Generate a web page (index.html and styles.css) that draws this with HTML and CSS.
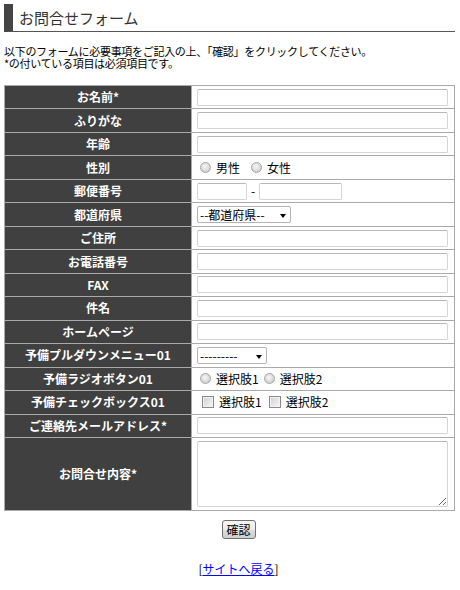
FILE: index.html
```html
<!DOCTYPE html>
<html lang="ja">
<head>
<meta charset="utf-8">
<title>お問合せフォーム</title>
<link rel="stylesheet" href="styles.css">
</head>
<body>
<div class="page">
  <h1 class="title">お問合せフォーム</h1>
  <p class="intro">以下のフォームに必要事項をご記入の上、「確認」をクリックしてください。<br>*の付いている項目は必須項目です。</p>
  <form class="form">
    <table class="form-table">
      <colgroup><col class="col-label"><col class="col-field"></colgroup>
      <tr><th>お名前*</th><td><input class="text" type="text"></td></tr>
      <tr><th>ふりがな</th><td><input class="text" type="text"></td></tr>
      <tr><th>年齢</th><td><input class="text" type="text"></td></tr>
      <tr><th>性別</th><td>
        <div class="choices gender">
          <label class="choice"><input class="radio" type="radio" name="sex">男性</label>
          <label class="choice"><input class="radio" type="radio" name="sex">女性</label>
        </div>
      </td></tr>
      <tr><th>郵便番号</th><td>
        <div class="zip"><input class="text zip1" type="text"><span class="dash">-</span><input class="text zip2" type="text"></div>
      </td></tr>
      <tr><th>都道府県</th><td><span class="select pref"><select><option>--都道府県--</option></select></span></td></tr>
      <tr><th>ご住所</th><td><input class="text" type="text"></td></tr>
      <tr><th>お電話番号</th><td><input class="text" type="text"></td></tr>
      <tr><th>FAX</th><td><input class="text" type="text"></td></tr>
      <tr><th>件名</th><td><input class="text" type="text"></td></tr>
      <tr><th>ホームページ</th><td><input class="text" type="text"></td></tr>
      <tr><th>予備プルダウンメニュー01</th><td><span class="select pulldown"><select><option>---------</option></select></span></td></tr>
      <tr><th>予備ラジオボタン01</th><td>
        <div class="choices">
          <label class="choice"><input class="radio" type="radio" name="r1">選択肢1</label>
          <label class="choice"><input class="radio" type="radio" name="r1">選択肢2</label>
        </div>
      </td></tr>
      <tr><th>予備チェックボックス01</th><td>
        <div class="choices">
          <label class="choice"><input class="check" type="checkbox">選択肢1</label>
          <label class="choice"><input class="check" type="checkbox">選択肢2</label>
        </div>
      </td></tr>
      <tr><th>ご連絡先メールアドレス*</th><td><input class="text" type="text"></td></tr>
      <tr class="tall"><th>お問合せ内容*</th><td><textarea class="area"></textarea></td></tr>
    </table>
    <div class="actions"><button type="button" class="submit">確認</button></div>
    <p class="back">[<a href="#">サイトへ戻る</a>]</p>
  </form>
</div>
</body>
</html>
```
FILE: styles.css
```css
html, body {
  margin: 0;
  padding: 0;
  background: #fff;
}
body {
  font-family: "Noto Sans CJK JP", "Liberation Sans", sans-serif;
  font-size: 12px;
  color: #000;
}
.page {
  width: 451px;
  padding: 4px 4px 0 4px;
}
.title {
  margin: 0;
  height: 27px;
  line-height: 27px;
  border-left: 9px solid #444;
  border-bottom: 1px solid #555;
  padding-left: 6px;
  font-size: 15px;
  font-weight: normal;
  color: #333;
}
.intro {
  margin: 13px 0 16px 0;
  font-size: 11px;
  line-height: 12px;
  letter-spacing: -0.3px;
}
.form {
  margin: 0;
}
.form-table {
  width: 451px;
  border-collapse: collapse;
  table-layout: fixed;
}
.col-label {
  width: 187px;
}
.form-table tr {
  height: 23.47px;
}
.form-table tr.tall {
  height: 73px;
}
.form-table th,
.form-table td {
  border: 1px solid #aaa;
  padding: 0;
  vertical-align: middle;
}
.form-table th {
  background: #404040;
  color: #fff;
  font-weight: bold;
  font-size: 12px;
  text-align: center;
  line-height: 14px;
}
.form-table td {
  padding-left: 5px;
  line-height: 14px;
}
.text {
  box-sizing: border-box;
  display: block;
  width: 251px;
  height: 17px;
  margin: 0;
  padding: 0 2px;
  border: 1px solid #d4d4d4;
  border-top-color: #b8b8b8;
  border-radius: 2px;
  background: #fff;
  font: inherit;
  outline: none;
}
.zip {
  display: flex;
  align-items: center;
}
.zip .text.zip1 {
  width: 50px;
}
.zip .text.zip2 {
  width: 83px;
}
.dash {
  margin: 0 4px;
  width: 4px;
  text-align: center;
  line-height: 12px;
}
.choices {
  display: flex;
  align-items: center;
  gap: 5px;
  padding-left: 3px;
}
.choices.gender {
  gap: 11px;
}
.choice {
  display: inline-flex;
  align-items: center;
  gap: 5px;
}
.radio {
  appearance: none;
  -webkit-appearance: none;
  box-sizing: border-box;
  width: 11px;
  height: 11px;
  margin: 0;
  border: 1px solid #a8a8a8;
  border-radius: 50%;
  background: radial-gradient(circle at 45% 40%, #f6f6f6 0%, #e0e0e0 45%, #bdbdbd 100%);
}
.check {
  appearance: none;
  -webkit-appearance: none;
  box-sizing: border-box;
  width: 12px;
  height: 12px;
  margin: 0 0 0 2px;
  border: 1px solid #8a8a8a;
  background: linear-gradient(135deg, #cfcfcf 0%, #e8e8e8 60%, #f8f8f8 100%);
  box-shadow: inset 0 0 0 1px #f2f2f2;
}
.select {
  position: relative;
  display: inline-block;
  vertical-align: middle;
}
.select select {
  appearance: none;
  -webkit-appearance: none;
  box-sizing: border-box;
  height: 17px;
  margin: 0;
  padding: 0 0 0 2px;
  border: 1px solid #b4b4b4;
  border-radius: 2px;
  background: #fff;
  font: inherit;
  line-height: 15px;
  color: #000;
  display: block;
}
.select.pref select {
  width: 94px;
}
.select.pulldown select {
  width: 70px;
}
.select::after {
  content: "";
  position: absolute;
  right: 5px;
  top: 8px;
  width: 0;
  height: 0;
  border-left: 3.5px solid transparent;
  border-right: 3.5px solid transparent;
  border-top: 4px solid #000;
  pointer-events: none;
}
.area {
  box-sizing: border-box;
  display: block;
  width: 251px;
  height: 66px;
  margin: 0;
  padding: 2px;
  border: 1px solid #d4d4d4;
  border-top-color: #b8b8b8;
  border-radius: 2px;
  font: inherit;
  resize: both;
  outline: none;
}
.actions {
  text-align: center;
  padding-left: 18px;
  margin-top: 9px;
}
.submit {
  box-sizing: border-box;
  width: 34px;
  height: 19px;
  padding: 0;
  margin: 0;
  border: 1px solid #707070;
  border-radius: 3px;
  background: linear-gradient(#f6f6f6 0%, #ececec 50%, #dcdcdc 51%, #cfcfcf 100%);
  font: inherit;
  font-size: 12px;
  line-height: 16px;
  color: #000;
}
.back {
  margin: 23px 0 0 0;
  text-align: center;
  padding-left: 18px;
  line-height: 14px;
}
.back a {
  color: #00f;
  text-decoration: underline;
}
```
